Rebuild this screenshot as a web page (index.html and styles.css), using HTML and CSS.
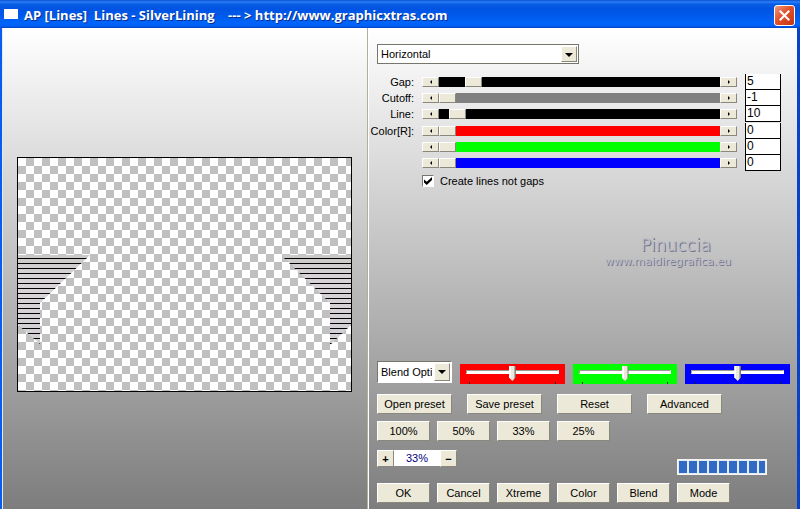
FILE: index.html
```html
<!DOCTYPE html>
<html lang="en">
<head>
<meta charset="utf-8">
<title>AP [Lines] Lines - SilverLining</title>
<link rel="stylesheet" href="styles.css">
</head>
<body>
<div class="window">
  <header class="titlebar">
    <span class="app-icon"></span>
    <h1 class="title">AP [Lines]  Lines - SilverLining    --- &gt; http://www.graphicxtras.com</h1>
    <button class="close" type="button" aria-label="Close">
      <svg viewBox="0 0 20 20" width="20" height="20"><path d="M5 5 15 15M15 5 5 15" stroke="#fff" stroke-width="2.200" fill="none"/></svg>
    </button>
  </header>
  <main class="client">
    <section class="preview-pane">
      <svg class="preview" viewBox="0 0 333 233" role="img" aria-label="Preview">
        <defs>
          <pattern id="checks" width="16" height="16" patternUnits="userSpaceOnUse">
            <rect width="16" height="16" fill="#fff"/>
            <path d="M8 0h8v8H8zM0 8h8v8H0z" fill="#c0c0c0"/>
          </pattern>
          <pattern id="rules" width="5" height="5" patternUnits="userSpaceOnUse">
            <path d="M0 0h5v1H0z" fill="#000"/>
          </pattern>
          <linearGradient id="silver" x1="0" y1="0" x2="0" y2="1">
            <stop offset="0" stop-color="#c9c9c6"/>
            <stop offset=".25" stop-color="#d8d3d6"/>
            <stop offset="1" stop-color="#d2cfd4"/>
          </linearGradient>
        </defs>
        <rect width="333" height="233" fill="url(#checks)"/>
        <path d="M0 97H72L22 145V186L0 167Z" fill="url(#silver)"/>
        <path d="M0 100H69L22 145V186L0 167Z" fill="url(#rules)"/>
        <path d="M264 97H333V167L312 187V145Z" fill="url(#silver)"/>
        <path d="M266 100H333V167L312 187V145Z" fill="url(#rules)"/>
      </svg>
    </section>
    <form class="controls">
      <div class="combo combo-wide">
        <select aria-label="Direction"><option>Horizontal</option></select>
        <span class="drop"></span>
      </div>

      <div class="params">
        <div class="param">
          <label for="gap">Gap:</label>
          <div class="scroll black">
            <button type="button" class="step prev" aria-label="Less gap"></button>
            <input id="gap" type="range" min="0" max="50" value="5">
            <button type="button" class="step next" aria-label="More gap"></button>
          </div>
          <input class="value" type="text" value="5" aria-label="Gap value">
        </div>
        <div class="param">
          <label for="cutoff">Cutoff:</label>
          <div class="scroll gray">
            <button type="button" class="step prev" aria-label="Less cutoff"></button>
            <input id="cutoff" type="range" min="-1" max="255" value="-1">
            <button type="button" class="step next" aria-label="More cutoff"></button>
          </div>
          <input class="value" type="text" value="-1" aria-label="Cutoff value">
        </div>
        <div class="param">
          <label for="line">Line:</label>
          <div class="scroll black">
            <button type="button" class="step prev" aria-label="Thinner line"></button>
            <input id="line" type="range" min="0" max="255" value="10">
            <button type="button" class="step next" aria-label="Thicker line"></button>
          </div>
          <input class="value" type="text" value="10" aria-label="Line value">
        </div>
        <div class="param color-start">
          <label for="red">Color[R]:</label>
          <div class="scroll red">
            <button type="button" class="step prev" aria-label="Less red"></button>
            <input id="red" type="range" min="0" max="255" value="0">
            <button type="button" class="step next" aria-label="More red"></button>
          </div>
          <input class="value" type="text" value="0" aria-label="Red value">
        </div>
        <div class="param">
          <span></span>
          <div class="scroll green">
            <button type="button" class="step prev" aria-label="Less green"></button>
            <input type="range" min="0" max="255" value="0" aria-label="Green">
            <button type="button" class="step next" aria-label="More green"></button>
          </div>
          <input class="value" type="text" value="0" aria-label="Green value">
        </div>
        <div class="param">
          <span></span>
          <div class="scroll blue">
            <button type="button" class="step prev" aria-label="Less blue"></button>
            <input type="range" min="0" max="255" value="0" aria-label="Blue">
            <button type="button" class="step next" aria-label="More blue"></button>
          </div>
          <input class="value" type="text" value="0" aria-label="Blue value">
        </div>
      </div>
      <label class="check"><input type="checkbox" checked>Create lines not gaps</label>

      <div class="watermark">
        <div class="mark-name">Pinuccia</div>
        <div class="mark-site">www.maidiregrafica.eu</div>
      </div>

      <div class="blend-row">
        <div class="combo combo-small">
          <select aria-label="Blend options"><option>Blend Options</option></select>
          <span class="drop"></span>
        </div>
        <div class="track red"><input type="range" min="0" max="100" value="50" aria-label="Red balance"></div>
        <div class="track green"><input type="range" min="0" max="100" value="50" aria-label="Green balance"></div>
        <div class="track blue"><input type="range" min="0" max="100" value="50" aria-label="Blue balance"></div>
      </div>
      <div class="row presets">
        <button type="button" class="btn">Open preset</button>
        <button type="button" class="btn">Save preset</button>
        <button type="button" class="btn">Reset</button>
        <button type="button" class="btn">Advanced</button>
      </div>
      <div class="row zooms">
        <button type="button" class="btn">100%</button>
        <button type="button" class="btn">50%</button>
        <button type="button" class="btn">33%</button>
        <button type="button" class="btn">25%</button>
      </div>
      <div class="status">
        <div class="zoom-step">
          <button type="button" class="btn sign">+</button>
          <input type="text" value="33%" aria-label="Zoom">
          <button type="button" class="btn sign">−</button>
        </div>
        <progress max="100" value="100" aria-label="Rendering"></progress>
      </div>
      <div class="row actions">
        <button type="button" class="btn">OK</button>
        <button type="button" class="btn">Cancel</button>
        <button type="button" class="btn">Xtreme</button>
        <button type="button" class="btn">Color</button>
        <button type="button" class="btn">Blend</button>
        <button type="button" class="btn">Mode</button>
      </div>
    </form>
  </main>
</div>
</body>
</html>
```
FILE: styles.css
```css
* { box-sizing: border-box; }

:root {
  --face: #ece9d8;
  --shade: #8a887c;
}

body {
  margin: 0;
  font: 11px/14px "Liberation Sans", Arial, sans-serif;
  color: #000;
}

button, input, select {
  margin: 0;
  font: inherit;
  color: inherit;
}

.window {
  display: flex;
  flex-direction: column;
  min-height: 100vh;
}

/* Title bar */
.titlebar {
  display: flex;
  align-items: center;
  height: 28px;
  padding: 2px 5px 0 4px;
  background: linear-gradient(#0a4fd0 0, #2a80f8 2px, #0a5ce4 4px, #0054e3 9px, #0058ea 15px, #0065fb 23px, #0060f5 26px, #0042c8 28px);
}

.app-icon {
  width: 14px;
  height: 10px;
  margin: 0 6px 2px 0;
  background: #fff;
}

.title {
  flex: 1;
  margin: 0;
  font: bold 13px/16px "Open Sans", "Noto Sans", sans-serif;
  color: #fff;
  white-space: pre;
  text-shadow: 1px 1px 0 #0a2f8a;
}

.close {
  width: 21px;
  height: 21px;
  padding: 0;
  border: 1px solid #fff;
  border-radius: 3px;
  background: linear-gradient(135deg, #ee9a80, #e2502c 45%, #c4350f);
}

.close svg { display: block; width: 19px; height: 19px; }

/* Client area */
.client {
  flex: 1;
  display: grid;
  grid-template-columns: 366fr 429fr;
  border-left: 2px solid #0a5cf0;
  border-right: 3px solid #0842cc;
  background: linear-gradient(#fff, #7d7d7d);
}

.preview-pane {
  padding: 129px 15px 0 14px;
  border-left: 1px solid #e8e8e8;
  border-right: 1px solid #b0ae9c;
}

.preview {
  display: block;
  width: 100%;
  border: 1px solid #000;
}

.controls {
  display: flex;
  flex-direction: column;
  padding: 16px 7px 6px 8px;
  border-left: 1px solid #fff;
}

/* Drop-down lists */
.combo {
  position: relative;
  display: flex;
  padding: 1px;
  border: 1px solid;
  border-color: #77766c #fff #fff #77766c;
  background: #fff;
}

.combo-wide { width: 202px; height: 20px; border-color: #77766c; }
.combo-small { width: 75px; height: 22px; }

.combo select {
  appearance: none;
  width: 100%;
  padding: 0 18px 0 2px;
  border: 0;
  border-radius: 0;
  background: #fff;
  white-space: nowrap;
}

.drop {
  position: absolute;
  top: 1px;
  right: 1px;
  bottom: 1px;
  width: 16px;
  border: 1px solid;
  border-color: #fff var(--shade) var(--shade) #fff;
  background: var(--face);
  pointer-events: none;
}

.drop::after {
  content: "";
  display: block;
  margin: 6px 3px;
  border: 4px solid transparent;
  border-top-color: #000;
  border-bottom: 0;
}

/* Parameter rows */
.params { margin: 10px 9px 0 -8px; }

.param {
  display: grid;
  grid-template-columns: 45px 1fr 36px;
  gap: 8px;
  height: 16px;
  align-items: center;
}

.color-start { margin-top: 1px; }

.param label { text-align: right; }

.scroll { display: flex; height: 10px; }

.scroll input {
  appearance: none;
  flex: 1;
  min-width: 0;
  height: 10px;
  background: none;
}

.scroll input::-webkit-slider-thumb {
  appearance: none;
  width: 17px;
  height: 10px;
  border: 1px solid;
  border-color: #fff var(--shade) var(--shade) #fff;
  background: var(--face);
}

.black { background: #000; }
.gray { background: #808080; }
.red { background: #f00; }
.green { background: #0f0; }
.blue { background: #00f; }

.step {
  display: grid;
  place-items: center;
  width: 17px;
  height: 10px;
  padding: 0;
  border: 1px solid;
  border-color: #fff var(--shade) var(--shade) #fff;
  background: var(--face);
}

.step::after {
  content: "";
  border: 2px solid transparent;
}

.prev::after { border-right-color: #000; border-left: 0; }
.next::after { border-left-color: #000; border-right: 0; }

.value {
  width: 100%;
  height: 16px;
  padding: 0 1px 1px;
  border: 1px solid #000;
  border-top: 0;
  background: #fff;
  font-size: 12px;
}

.check {
  display: flex;
  align-items: center;
  gap: 6px;
  height: 14px;
  margin: 3px 0 0 45px;
}

.check input {
  appearance: none;
  width: 12px;
  height: 12px;
  border: 1px solid;
  border-color: #77766c #fff #fff #77766c;
  background: #fff;
}

.check input:checked::before {
  content: "";
  display: block;
  width: 8px;
  height: 8px;
  margin: 1px;
  background: #000;
  clip-path: polygon(0 30%, 35% 60%, 100% 0, 100% 38%, 35% 100%, 0 70%);
}

.watermark {
  align-self: flex-end;
  margin: 47px 59px 0 0;
  text-align: center;
  color: #bdbdc6;
  text-shadow: 1px 1px 0 #74748e;
  font-family: "DejaVu Sans", sans-serif;
}

.mark-name { padding-left: 16px; font-size: 17px; line-height: 20px; }
.mark-site { font-size: 11px; line-height: 14px; }

/* Lower control block */
.blend-row {
  display: flex;
  gap: 8px;
  align-items: flex-start;
  margin-top: auto;
}

.track {
  display: flex;
  align-items: flex-start;
  flex: 1;
  height: 20px;
  margin-top: 3px;
  padding: 2px 6px 0;
}

.track input {
  appearance: none;
  width: 100%;
  height: 18px;
  background:
    linear-gradient(#222, #222) 3px 100% / 1px 2px no-repeat,
    linear-gradient(#222, #222) calc(100% - 3px) 100% / 1px 2px no-repeat;
}

.track input::-webkit-slider-runnable-track {
  height: 4px;
  margin-bottom: 6px;
  border: 1px solid;
  border-color: #9d9c90 #fff #fff #9d9c90;
  background: #fff;
}

.track input::-webkit-slider-thumb {
  appearance: none;
  width: 7px;
  height: 15px;
  margin-top: -5px;
  background: linear-gradient(90deg, #fff 2px, var(--face) 2px 5px, #777 6px);
  clip-path: polygon(0 0, 100% 0, 100% 75%, 50% 100%, 0 75%);
}

.row { display: flex; }

.btn {
  height: 20px;
  padding: 0;
  border: 1px solid;
  border-color: #fff var(--shade) var(--shade) #fff;
  background: var(--face);
  line-height: 14px;
}

.presets { gap: 15px; margin-top: 10px; }
.presets .btn { width: 75px; }
.zooms { margin-top: 7px; }
.actions { margin-top: 8px; }
.zooms, .actions { gap: 7px; }
.zooms .btn, .actions .btn { width: 53px; }

.status {
  display: flex;
  justify-content: space-between;
  height: 25px;
  margin: 9px 23px 0 0;
}

.zoom-step { display: flex; height: 17px; }
.zoom-step .sign { width: 17px; height: 17px; font-weight: bold; line-height: 12px; }

.zoom-step input {
  width: 46px;
  height: 16px;
  padding: 0 0 1px;
  border: 0;
  background: #fff;
  color: #000080;
  text-align: center;
}

progress {
  appearance: none;
  align-self: flex-end;
  width: 90px;
  height: 16px;
  padding: 1px;
  border: 1px solid #f4f4f0;
  background: #e6ecf4;
}

progress::-webkit-progress-bar { background: #e6ecf4; }

progress::-webkit-progress-value {
  background: repeating-linear-gradient(90deg, #316ac5 0 8px, #e6ecf4 8px 10px);
}
```
